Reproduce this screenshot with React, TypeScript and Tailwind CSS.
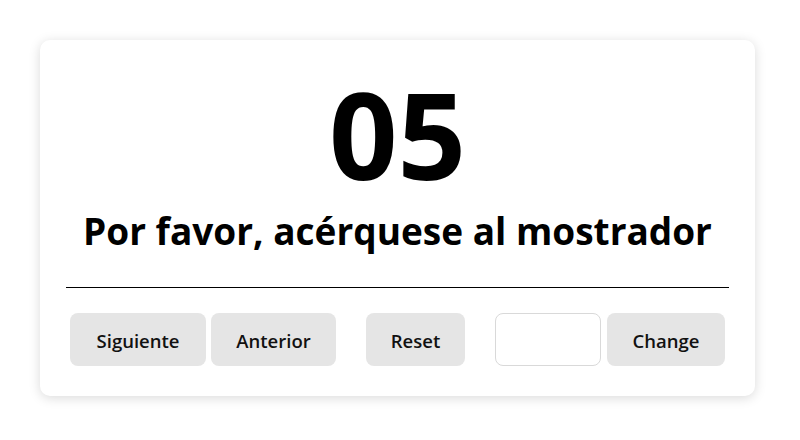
import React, { useState } from 'react';

export default function App() {
  const [turn, setTurn] = useState<number>(5);
  const [value, setValue] = useState<string>('');

  const pad = (n: number) => String(n).padStart(2, '0');

  return (
    <div className="w-[800px] h-[440px] bg-white pt-[40px] pl-[40px] font-['Open_Sans',sans-serif]">
      <div className="w-[715px] h-[356px] bg-white rounded-[10px] shadow-[0_2px_12px_rgba(0,0,0,0.15)] px-[26px] pt-[34px] flex flex-col">
        {/* numero actual */}
        <div className="text-[120px] leading-none font-bold text-black text-center h-[120px]">
          {pad(turn)}
        </div>

        <div className="text-[37px] leading-none font-bold text-black text-center mt-[18px] h-[44px]">
          Por favor, acérquese al mostrador
        </div>

        <div className="border-t border-black mt-[31px]" />

        <div className="flex justify-center items-center mt-[25px]">
          <button
            className="h-[53px] w-[136px] rounded-[8px] bg-[#e5e5e5] text-[18.5px] font-semibold text-[#111] pt-[2px]"
            onClick={() => setTurn((t) => t + 1)}
          >
            Siguiente
          </button>
          <button
            className="h-[53px] w-[125px] ml-[5px] rounded-[8px] bg-[#e5e5e5] text-[18.5px] font-semibold text-[#111] pt-[2px]"
            onClick={() => setTurn((t) => Math.max(0, t - 1))}
          >
            Anterior
          </button>
          <button
            className="h-[53px] w-[99px] ml-[30px] rounded-[8px] bg-[#e5e5e5] text-[18.5px] font-semibold text-[#111] pt-[2px]"
            onClick={() => setTurn(0)}
          >
            Reset
          </button>
          <input
            className="h-[53px] w-[106px] ml-[30px] rounded-[8px] border border-[#d9d9d9] bg-white px-2 outline-none"
            value={value}
            onChange={(e) => setValue(e.target.value)}
          />
          <button
            className="h-[53px] w-[118px] ml-[6px] rounded-[8px] bg-[#e5e5e5] text-[18.5px] font-semibold text-[#111] pt-[2px]"
            onClick={() => value && setTurn(Number(value) || 0)}
          >
            Change
          </button>
        </div>
      </div>
    </div>
  );
}
